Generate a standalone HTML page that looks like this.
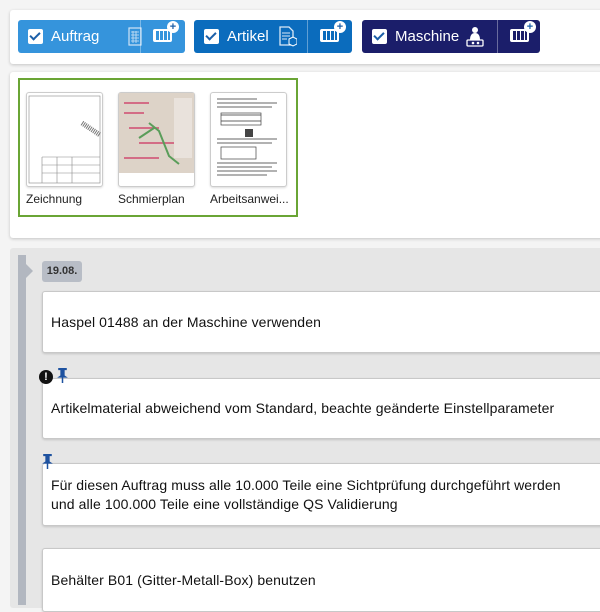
<!DOCTYPE html>
<html><head><meta charset="utf-8"><style>
*{box-sizing:border-box;margin:0;padding:0}
body{width:600px;height:600px;overflow:hidden;background:#f4f4f4;font-family:"Liberation Sans",sans-serif;position:relative}
.p1{position:absolute;left:10px;top:10px;width:600px;height:54px;background:#fff;box-shadow:0 1px 3px rgba(0,0,0,.2);border-radius:3px}
.btn{position:absolute;top:20px;height:33px;border-radius:3px;color:#fff;font-size:15px;display:flex;align-items:center}
.btn .cb{width:15px;height:15px;background:#fff;border-radius:2px;margin:0 8px 0 10px;position:relative}
.btn .cb:after{content:"";position:absolute;left:4px;top:1px;width:4px;height:8px;border:solid #1b5fa8;border-width:0 2px 2px 0;transform:rotate(45deg)}
.btn .div{position:absolute;top:0;bottom:0;width:1px;background:rgba(255,255,255,.35)}
.kb{position:absolute;top:9px;width:19px;height:13px;border:2px solid #fff;border-radius:2px;background:repeating-linear-gradient(90deg,#fff 0 1px,transparent 1px 4px)}
.kb:after{content:"+";position:absolute;right:-9px;top:-10px;width:12px;height:12px;border-radius:50%;background:#fff;color:#1b5fa8;font-size:11px;font-weight:bold;line-height:12px;text-align:center}
.p2{position:absolute;left:10px;top:72px;width:600px;height:166px;background:#fff;box-shadow:0 1px 3px rgba(0,0,0,.2);border-radius:3px}
.grn{position:absolute;left:18px;top:78px;width:280px;height:139px;border:2px solid #6aa535}
.th{position:absolute;top:92px;width:77px;height:95px;border:1px solid #ccc;border-radius:3px;background:#fff;box-shadow:0 1px 2px rgba(0,0,0,.15)}
.lbl{position:absolute;top:192px;font-size:12px;color:#222}
.p3{position:absolute;left:10px;top:248px;width:600px;height:360px;background:#e6e6e6;border-radius:3px}
.bar{position:absolute;left:18px;top:255px;width:8px;height:350px;background:#b2b7c0}
.arr{position:absolute;left:26px;top:264px;border:7px solid transparent;border-left:7px solid #b2b7c0;border-right:0}
.date{position:absolute;left:42px;top:261px;width:40px;height:21px;background:#b8bdc6;border-radius:3px;font-size:11px;font-weight:bold;color:#333;text-align:center;line-height:21px}
.card{position:absolute;left:42px;width:570px;background:#fff;border:1px solid #c8c8c8;border-radius:3px;box-shadow:0 1px 2px rgba(0,0,0,.15);font-size:14px;color:#111;padding-left:8px;display:flex;align-items:center;line-height:19px;letter-spacing:.1px}
.pin{position:absolute;width:13px;height:15px;z-index:2}
</style></head><body>
<div class="p1"></div>
<div class="btn" style="left:18px;width:167px;background:#3594dc"><div class="cb"></div>Auftrag
<svg style="position:absolute;left:110px;top:7px" width="14" height="19"><rect x="1" y="1" width="12" height="17" fill="none" stroke="#cfe3f5" stroke-width="1.2"/><path d="M3 5h8M3 8h8M3 11h8M3 14h8M5 4v12M8 4v12" stroke="#cfe3f5" stroke-width=".8"/></svg>
<div class="div" style="left:122px"></div><div class="kb" style="left:135px"></div></div>
<div class="btn" style="left:194px;width:158px;background:#0b6cbd"><div class="cb"></div>Artikel
<svg style="position:absolute;left:85px;top:6px" width="18" height="21"><path d="M1 1h9l4 4v14H1z" fill="none" stroke="#dbe9f6" stroke-width="1.3"/><path d="M3 7h8M3 10h8M3 13h5" stroke="#dbe9f6"/><path d="M10 13l4-2 4 2v5l-4 2-4-2z" fill="#0b6cbd" stroke="#fff"/></svg>
<div class="div" style="left:113px"></div><div class="kb" style="left:126px"></div></div>
<div class="btn" style="left:362px;width:178px;background:#1b1e6a"><div class="cb"></div>Maschine
<svg style="position:absolute;left:103px;top:6px" width="20" height="21"><circle cx="10" cy="4" r="3" fill="#fff"/><path d="M5 14c0-5 2-7 5-7s5 2 5 7z" fill="#fff"/><rect x="2" y="14" width="16" height="6" rx="1" fill="none" stroke="#fff" stroke-width="1.3"/><circle cx="8" cy="17" r="1.3" fill="#fff"/><circle cx="13" cy="17" r="1.3" fill="#fff"/></svg>
<div class="div" style="left:135px"></div><div class="kb" style="left:148px"></div></div>

<div class="p2"></div><div class="grn"></div>
<div class="th" style="left:26px"><svg width="75" height="93"><rect x="2" y="3" width="71" height="87" fill="none" stroke="#888" stroke-width=".6"/><path d="M55 30l18 12" stroke="#777" stroke-width="5" stroke-dasharray="1 1"/><path d="M15 64h58M15 64v26M30 64v26M45 64v26M15 72h58M15 80h58" stroke="#888" stroke-width=".6"/></svg></div>
<div class="lbl" style="left:26px">Zeichnung</div>
<div class="th" style="left:118px"><svg width="75" height="80"><rect width="75" height="80" fill="#ddd3c8"/><path d="M5 10h25M5 20h20M10 35h30M20 50h40M5 65h35" stroke="#d36d86" stroke-width="2"/><path d="M30 30l10 8 10 25 10 8M20 45l15-10" stroke="#5a9d5a" stroke-width="2" fill="none"/><rect x="55" y="5" width="18" height="60" fill="#e9e2dc"/></svg></div>
<div class="lbl" style="left:118px">Schmierplan</div>
<div class="th" style="left:210px"><svg width="75" height="93"><path d="M6 6h40M6 10h60M6 14h55M10 22h40M10 28h40M6 46h60M6 50h55M6 70h60M6 74h55M6 78h60M6 82h50" stroke="#666" stroke-width="1"/><rect x="10" y="20" width="40" height="12" fill="none" stroke="#444" stroke-width=".7"/><rect x="10" y="54" width="35" height="12" fill="none" stroke="#444" stroke-width=".7"/><rect x="34" y="36" width="8" height="8" fill="#444"/></svg></div>
<div class="lbl" style="left:210px">Arbeitsanwei...</div>

<div class="p3"></div><div class="bar"></div><div class="arr"></div>
<div class="date">19.08.</div>
<div class="card" style="top:291px;height:62px">Haspel 01488 an der Maschine verwenden</div>
<div class="card" style="top:378px;height:61px">Artikelmaterial abweichend vom Standard, beachte geänderte Einstellparameter</div>
<div style="position:absolute;z-index:2;left:39px;top:370px;width:14px;height:14px;border-radius:50%;background:#111;color:#fff;font-size:11px;font-weight:bold;text-align:center;line-height:14px">!</div>
<svg class="pin" style="left:56px;top:368px" viewBox="0 0 12 14"><path d="M2 0h8v2H8v5l3 2H1l3-2V2H2z M5.3 9h1.4v5H5.3z" fill="#1e52a0"/></svg>
<div class="card" style="top:463px;height:63px">Für diesen Auftrag muss alle 10.000 Teile eine Sichtprüfung durchgeführt werden<br>und alle 100.000 Teile eine vollständige QS Validierung</div>
<svg class="pin" style="left:41px;top:454px" viewBox="0 0 12 14"><path d="M2 0h8v2H8v5l3 2H1l3-2V2H2z M5.3 9h1.4v5H5.3z" fill="#1e52a0"/></svg>
<div class="card" style="top:548px;height:64px">Behälter B01 (Gitter-Metall-Box) benutzen</div>
</body></html>
